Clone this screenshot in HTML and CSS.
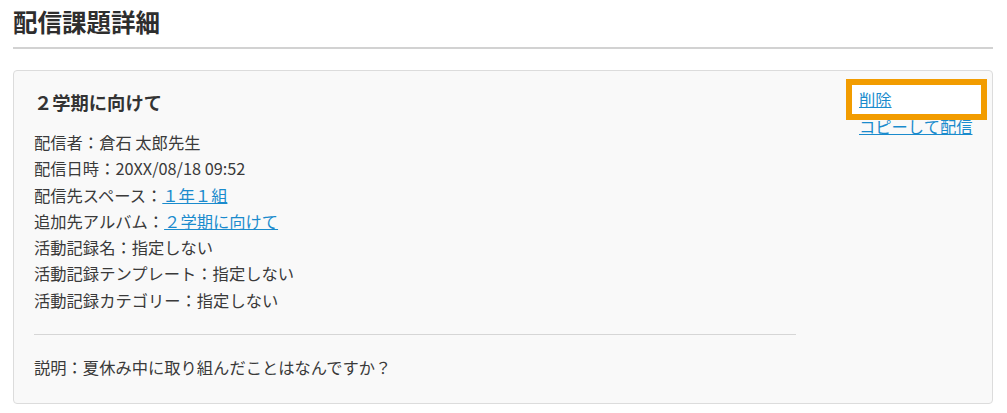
FILE: index.html
```html
<!DOCTYPE html>
<html lang="ja">

<head>
    <meta charset="UTF-8">
    <meta name="viewport" content="width=device-width, initial-scale=1.0">
    <title>配信課題詳細</title>
    <link rel="stylesheet" href="styles.css">
</head>

<body>
    <div class="page">
        <h1 class="page-title">配信課題詳細</h1>

        <div class="card">
            <div class="card-main">
                <h2 class="card-title">２学期に向けて</h2>

                <ul class="info-list">
                    <li>配信者：倉石 太郎先生</li>
                    <li>配信日時：20XX/08/18 09:52</li>
                    <li>配信先スペース：<a href="#" class="link">１年１組</a></li>
                    <li>追加先アルバム：<a href="#" class="link">２学期に向けて</a></li>
                    <li>活動記録名：指定しない</li>
                    <li>活動記録テンプレート：指定しない</li>
                    <li>活動記録カテゴリー：指定しない</li>
                </ul>

                <hr class="divider">

                <p class="description">説明：夏休み中に取り組んだことはなんですか？</p>
            </div>

            <div class="card-actions">
                <span class="mark"><a href="#" class="link">削除</a></span>
                <a href="#" class="link">コピーして配信</a>
            </div>
        </div>
    </div>
</body>

</html>
```

FILE: styles.css
```css
body {
    font-family: "Noto Sans CJK JP", "Noto Sans", sans-serif;
    background-color: #fff;
    color: #333;
    margin: 0;
    padding: 0;
}

.page {
    width: 980px;
    margin-left: 13px;
}

.page-title {
    margin: 0;
    padding-top: 5px;
    padding-bottom: 8px;
    font-size: 24.5px;
    line-height: 34px;
    font-weight: bold;
    color: #2e2e2e;
    border-bottom: 2px solid #d2d2d2;
}

.card {
    display: flex;
    margin-top: 21px;
    padding: 15px 14px 24px 20px;
    background-color: #f9f9f9;
    border: 1px solid #dcdcdc;
    border-radius: 4px;
    height: 334px;
    box-sizing: border-box;
}

.card-main {
    flex: 0 0 762px;
    margin-right: 63px;
}

.card-title {
    margin: 0;
    padding-top: 3px;
    font-size: 18.3px;
    line-height: 26px;
    font-weight: bold;
    color: #333;
}

.info-list {
    list-style: none;
    margin: 14px 0 0;
    padding: 0;
    font-size: 16.3px;
    line-height: 26.3px;
    color: #3a3a3a;
}

.divider {
    margin: 21px 0 0;
    border: none;
    border-top: 1px solid #d6d6d6;
}

.description {
    margin: 19px 0 0;
    font-size: 16.3px;
    line-height: 26px;
    color: #3a3a3a;
}

.link {
    color: #1a8bcd;
    text-decoration: underline;
}

.card-actions {
    display: flex;
    flex-direction: column;
    align-items: flex-start;
    font-size: 16.3px;
    line-height: 27px;
    white-space: nowrap;
}

.mark {
    position: relative;
    isolation: isolate;
}

.mark::before {
    content: "";
    position: absolute;
    left: -13px;
    top: -7px;
    width: 141px;
    height: 41px;
    box-sizing: border-box;
    border: 6px solid #f29c00;
    background-color: #fff;
    z-index: -1;
}
```
